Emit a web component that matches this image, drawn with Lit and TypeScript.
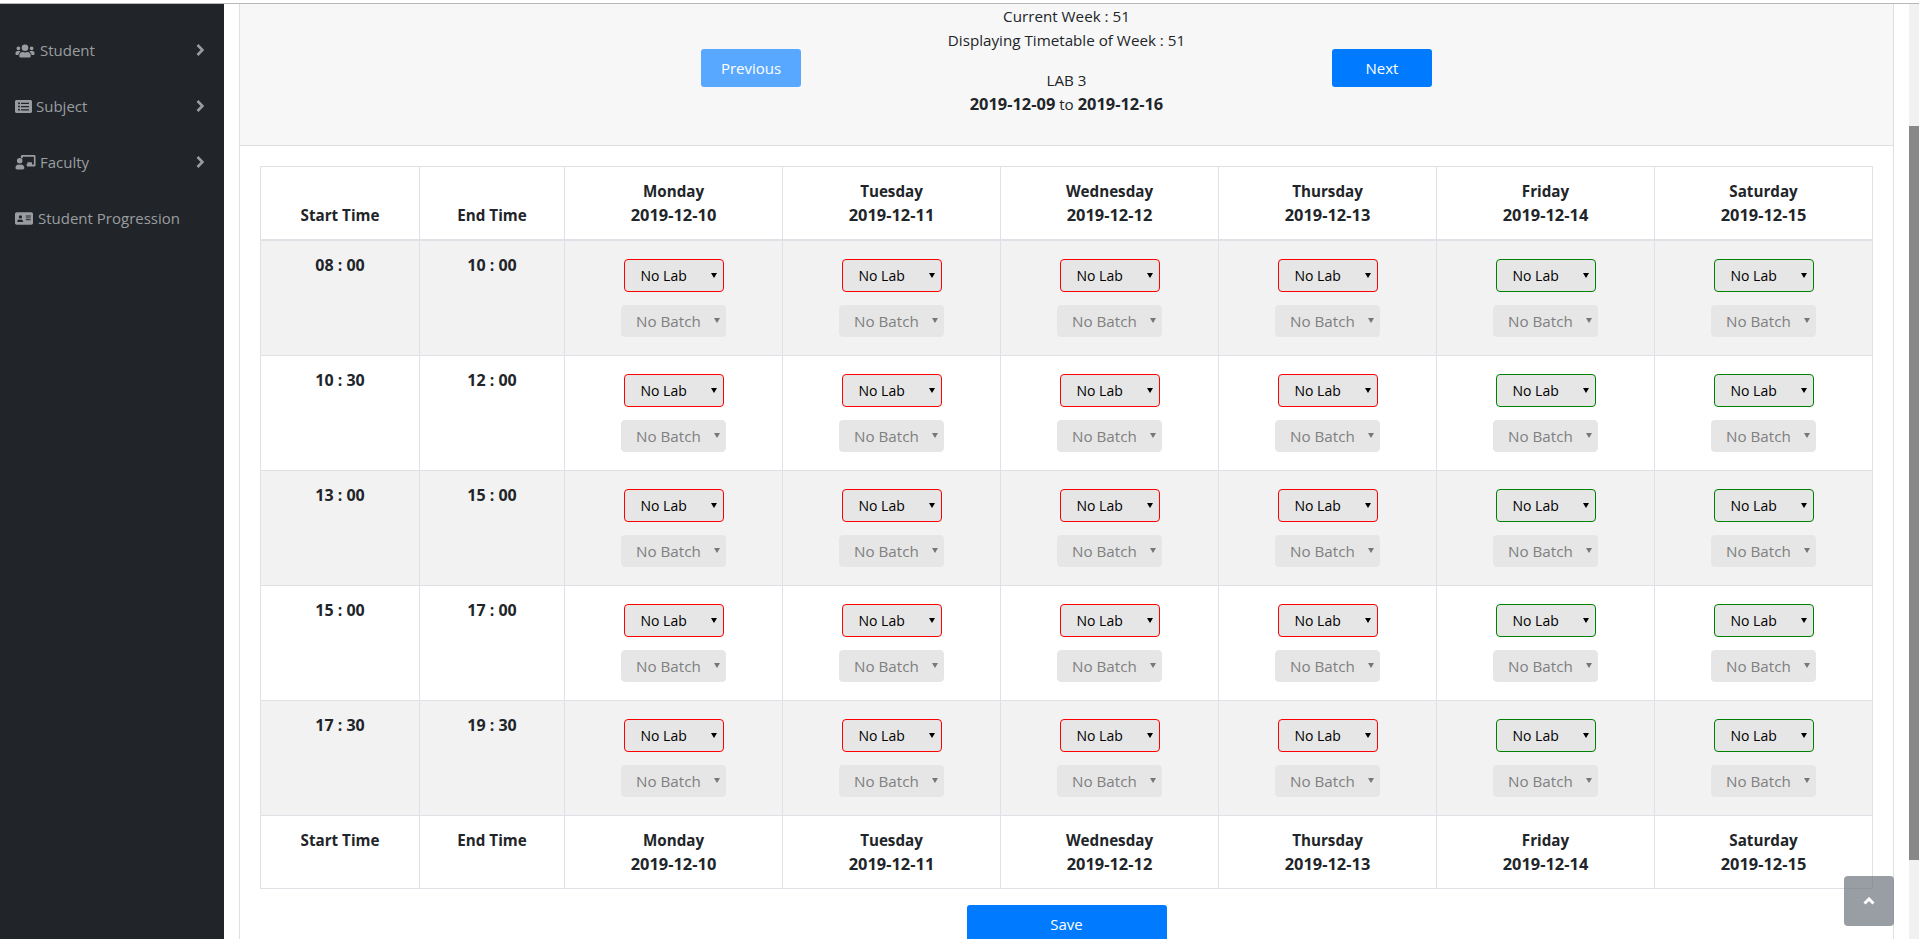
import { LitElement, html, css, svg } from "lit";
import { customElement } from "lit/decorators.js";

const days = [
  ["Monday", "2019-12-10"],
  ["Tuesday", "2019-12-11"],
  ["Wednesday", "2019-12-12"],
  ["Thursday", "2019-12-13"],
  ["Friday", "2019-12-14"],
  ["Saturday", "2019-12-15"],
];

const slots = [
  ["08 : 00", "10 : 00"],
  ["10 : 30", "12 : 00"],
  ["13 : 00", "15 : 00"],
  ["15 : 00", "17 : 00"],
  ["17 : 30", "19 : 30"],
];

const icons = {
  users: svg`<path d="M2.9 7.2a1.9 1.9 0 1 0 0-3.8 1.9 1.9 0 0 0 0 3.8zm13.2 0a1.9 1.9 0 1 0 0-3.8 1.9 1.9 0 0 0 0 3.8zM17 8.1h-1.9c-.5 0-1 .2-1.3.6 1.2.7 2.1 1.8 2.3 3.3h1.9c.5 0 1-.4 1-1v-.9c0-1.100-.9-2-2-2zM9.500 8.100a3.300 3.300 0 1 0 0-6.600 3.300 3.300 0 0 0 0 6.600zm2.300.9h-.3c-.7.300-1.300.5-2 .5s-1.400-.2-2-.5h-.3C5.300 9 3.800 10.500 3.800 12.300v.9c0 .8.6 1.400 1.400 1.400h8.600c.8 0 1.400-.6 1.400-1.400v-.9c0-1.800-1.500-3.300-3.400-3.300zM5.100 8.700c-.3-.4-.8-.6-1.300-.6H2c-1.100 0-2 .9-2 2v.9c0 .6.4 1 1 1h1.900c.2-1.500 1.100-2.600 2.200-3.300z"/>`,
  list: svg`<path d="M15.500 1H1.500C.7 1 0 1.700 0 2.500v10C0 13.300.7 14 1.500 14h14c.8 0 1.500-.7 1.500-1.500v-10C17 1.700 16.300 1 15.500 1zM4 11.700a1 1 0 1 1 0-2 1 1 0 0 1 0 2zm0-3.200a1 1 0 1 1 0-2 1 1 0 0 1 0 2zm0-3.200a1 1 0 1 1 0-2 1 1 0 0 1 0 2zm10 5.900c0 .2-.1.300-.3.300H6.300c-.2 0-.3-.1-.3-.3v-.7c0-.2.100-.3.300-.3h7.400c.2 0 .3.100.3.300v.7zm0-3.200c0 .2-.1.300-.3.300H6.300c-.2 0-.3-.1-.3-.3v-.7c0-.2.100-.3.300-.3h7.400c.2 0 .3.100.3.300V8zm0-3.200c0 .2-.1.300-.3.300H6.300c-.2 0-.3-.1-.3-.3v-.7c0-.2.100-.3.300-.3h7.400c.2 0 .3.100.3.300v.7z"/>`,
  teacher: svg`<path d="M5.200 9.300c-.1 0-.2 0-.2.100-.3.100-.6.100-.9.100s-.6 0-.9-.1c-.1 0-.2-.1-.2-.1C1.300 9.300 0 10.600 0 12.300 0 13.200.7 14 1.600 14h5.400c.9 0 1.600-.8 1.600-1.700 0-1.700-1.500-3-3.400-3zM4.100 8.300a2.700 2.700 0 1 0 0-5.400 2.700 2.700 0 0 0 0 5.400zM18.100 0H6.500c-.7 0-1.300.6-1.300 1.300v1.300c.7.200 1.300.5 1.800.9V1.600h10.800v7.700h-1.800V7.500c0-.3-.2-.5-.5-.5h-3.600c-.3 0-.5.200-.5.500v1.800H10.200c.4.500.8 1.100 1 1.800h6.900c.7 0 1.300-.6 1.300-1.300V1.300c0-.7-.6-1.300-1.300-1.300z"/>`,
  card: svg`<path d="M16.700 1H1.800C.8 1 0 1.800 0 2.800v9.400c0 1 .8 1.800 1.800 1.800h14.900c1 0 1.800-.8 1.800-1.800V2.800c0-1-.8-1.800-1.800-1.800zM5.600 4.200a1.700 1.700 0 1 1 0 3.400 1.700 1.700 0 0 1 0-3.400zm3.200 6.300c0 .3-.3.500-.6.500H3c-.3 0-.6-.2-.6-.5v-.5c0-.8.800-1.500 1.700-1.500h.2c.3.100.6.200.9.200s.6-.1.900-.2h.2c1 0 1.700.7 1.700 1.500v.5zM16.200 9c0 .1-.1.200-.2.200h-4.700c-.1 0-.2-.1-.2-.2v-.5c0-.1.100-.2.200-.2H16c.1 0 .2.100.2.200V9zm0-1.900c0 .1-.1.200-.2.200h-4.700c-.1 0-.2-.1-.2-.2v-.5c0-.1.100-.2.200-.2H16c.1 0 .2.100.2.200v.5zm0-1.900c0 .1-.1.200-.2.200h-4.700c-.1 0-.2-.1-.2-.2v-.5c0-.1.100-.2.200-.2H16c.1 0 .2.100.2.200v.5z"/>`,
};

const nav = [
  { label: "Student", icon: icons.users, cls: "ic-users", arrow: true },
  { label: "Subject", icon: icons.list, cls: "ic-list", arrow: true },
  { label: "Faculty", icon: icons.teacher, cls: "ic-teacher", arrow: true },
  { label: "Student Progression", icon: icons.card, cls: "ic-card", arrow: false },
];

const viewBoxes: Record<string, string> = {
  "ic-users": "0 0 19 15",
  "ic-list": "0 0 17 15",
  "ic-teacher": "0 0 19.400 14.500",
  "ic-card": "0 0 18.500 15",
};

@customElement("app-root")
export class AppRoot extends LitElement {
  static styles = css`
    :host {
      display: block;
      height: 939px;
      overflow: hidden;
      box-sizing: border-box;
      padding-top: 3px;
      background: #fff;
      color: #212529;
      font-family: "Open Sans", "Noto Sans", sans-serif;
      font-size: 15.2px;
      line-height: 24px;
    }
    .page {
      display: flex;
      height: 936px;
      border-top: 1px solid #b8b8b8;
      box-sizing: border-box;
      position: relative;
    }
    .sidebar {
      width: 224px;
      flex: none;
      background: #212529;
      padding-top: 18px;
      box-sizing: border-box;
    }
    .nav-item {
      display: flex;
      align-items: center;
      height: 56px;
      padding: 0 20px 0 15px;
      color: #9a9da0;
      font-size: 15px;
    }
    .nav-item svg {
      flex: none;
      fill: #9a9da0;
      height: 15px;
    }
    .ic-users {
      width: 20px;
      margin-right: 5px;
    }
    .ic-list {
      width: 17px;
      margin-right: 4px;
    }
    .ic-teacher {
      width: 21px;
      margin-right: 4px;
    }
    .ic-card {
      width: 18px;
      margin-right: 5px;
    }
    .nav-item span {
      flex: 1;
    }
    .nav-item .chev {
      width: 8px;
      height: 12px;
      stroke: #9a9da0;
      stroke-width: 2.6;
      fill: none;
    }
    .main {
      flex: 1;
      min-width: 0;
      padding: 0 15px;
    }
    .card {
      border: 1px solid #dfdfdf;
      border-top: 0;
      height: 960px;
      box-sizing: border-box;
    }
    .card-header {
      height: 142px;
      box-sizing: border-box;
      padding: 0 461px;
      background: #f7f7f7;
      border-bottom: 1px solid #dfdfdf;
      display: flex;
      align-items: flex-start;
    }
    .head-mid {
      flex: 1;
      text-align: center;
    }
    .head-mid p {
      margin: 0;
    }
    .head-mid .lab {
      margin-top: 16px;
    }
    .head-mid b {
      font-size: 16.4px;
    }
    .btn {
      display: block;
      flex: none;
      width: 100px;
      height: 38px;
      margin-top: 45px;
      border: 0;
      border-radius: 3px;
      background: #007bff;
      color: #fff;
      font: inherit;
      font-size: 15px;
      padding: 0;
    }
    .btn.off {
      background: #59a8ff;
    }
    .card-body {
      padding: 20px 20px 0;
    }
    table {
      border-collapse: collapse;
      table-layout: fixed;
      width: 1613px;
      text-align: center;
      font-weight: 700;
    }
    th,
    td {
      box-sizing: border-box;
      border: 1px solid #dee2e6;
      padding: 12px;
      vertical-align: top;
    }
    thead th {
      vertical-align: bottom;
      border-bottom-width: 2px;
    }
    .date {
      font-size: 16.4px;
    }
    .w-start {
      width: 159px;
    }
    .w-end {
      width: 145px;
    }
    .w-day {
      width: 218px;
    }
    tbody tr:nth-child(odd) {
      background: #f2f2f2;
    }
    tbody th {
      font-size: 16px;
    }
    td.pick {
      padding: 18px 0 0;
      height: 115px;
    }
    .sel {
      position: relative;
      display: block;
      margin: 0 auto;
    }
    .sel.lab-wrap {
      width: 100px;
    }
    .sel.batch-wrap {
      width: 105px;
      margin-top: 13px;
    }
    select {
      appearance: none;
      display: block;
      width: 100%;
      box-sizing: border-box;
      padding: 0 0 0 16px;
      font: 400 14px "Open Sans", "Noto Sans", sans-serif;
      border-radius: 4px;
      background-color: #e6e6e6;
    }
    .lab-sel {
      height: 33px;
      color: #000;
    }
    .lab-sel.red {
      border: 1px solid #f00;
    }
    .lab-sel.green {
      border: 1px solid #008000;
    }
    .batch-sel {
      height: 32px;
      padding-left: 14px;
      border: 1px solid #e6e6e6;
      color: #808080;
      opacity: 1;
      font-size: 15.2px;
    }
    .arrow {
      position: absolute;
      right: 7px;
      top: 14px;
      border-style: solid;
      border-width: 5px 3.5px 0;
      border-color: #000 transparent transparent;
    }
    .batch-wrap .arrow {
      right: 6px;
      top: 13px;
      border-top-color: #777;
    }
    .save-row {
      display: flex;
      justify-content: center;
      padding-top: 16px;
    }
    .btn.save {
      width: 200px;
      margin-top: 0;
    }
    .to-top {
      position: absolute;
      left: 1844px;
      top: 872px;
      width: 50px;
      height: 50px;
      border: 0;
      padding: 0;
      border-radius: 4px;
      background: rgba(108, 117, 125, 0.7);
      display: flex;
      align-items: center;
      justify-content: center;
    }
    .to-top svg {
      width: 12px;
      height: 8px;
      stroke: #fff;
      stroke-width: 3;
      fill: none;
    }
    .scrollbar {
      width: 10px;
      flex: none;
      background: #f1f1f1;
      padding-top: 122px;
    }
    .thumb {
      height: 734px;
      background: #888;
    }
  `;

  renderPicker(day: number) {
    const cls = day < 4 ? "red" : "green";
    return html`<td class="pick">
      <div class="sel lab-wrap">
        <select class="lab-sel ${cls}"><option>No Lab</option></select>
        <span class="arrow"></span>
      </div>
      <div class="sel batch-wrap">
        <select class="batch-sel" disabled><option>No Batch</option></select>
        <span class="arrow"></span>
      </div>
    </td>`;
  }

  renderDays(sized = false) {
    return days.map(
      (d) => html`<th class=${sized ? "w-day" : ""}>${d[0]}<br /><span class="date">${d[1]}</span></th>`
    );
  }

  render() {
    return html`
      <div class="page">
        <nav class="sidebar">
          ${nav.map(
            (n) => html`<div class="nav-item">
              <svg class=${n.cls} viewBox=${viewBoxes[n.cls]}>${n.icon}</svg>
              <span>${n.label}</span>
              ${n.arrow
                ? html`<svg class="chev" viewBox="0 0 8 12"><path d="M1.500 1l5 5-5 5" /></svg>`
                : ""}
            </div>`
          )}
        </nav>
        <div class="main">
          <div class="card">
            <div class="card-header">
              <button class="btn off">Previous</button>
              <div class="head-mid">
                <p>Current Week : 51</p>
                <p>Displaying Timetable of Week : 51</p>
                <p class="lab">LAB 3</p>
                <p><b>2019-12-09</b> to <b>2019-12-16</b></p>
              </div>
              <button class="btn">Next</button>
            </div>
            <div class="card-body">
              <table>
                <thead>
                  <tr>
                    <th class="w-start">Start Time</th>
                    <th class="w-end">End Time</th>
                    ${this.renderDays(true)}
                  </tr>
                </thead>
                <tbody>
                  ${slots.map(
                    (s) => html`<tr>
                      <th>${s[0]}</th>
                      <th>${s[1]}</th>
                      ${days.map((_, i) => this.renderPicker(i))}
                    </tr>`
                  )}
                </tbody>
                <tfoot>
                  <tr>
                    <th>Start Time</th>
                    <th>End Time</th>
                    ${this.renderDays()}
                  </tr>
                </tfoot>
              </table>
              <div class="save-row"><button class="btn save">Save</button></div>
            </div>
          </div>
        </div>
        <div class="scrollbar"><div class="thumb"></div></div>
        <button class="to-top" aria-label="Back to top">
          <svg viewBox="0 0 12 8"><path d="M1.500 6.500l4.500-4.500 4.500 4.500" /></svg>
        </button>
      </div>
    `;
  }
}
